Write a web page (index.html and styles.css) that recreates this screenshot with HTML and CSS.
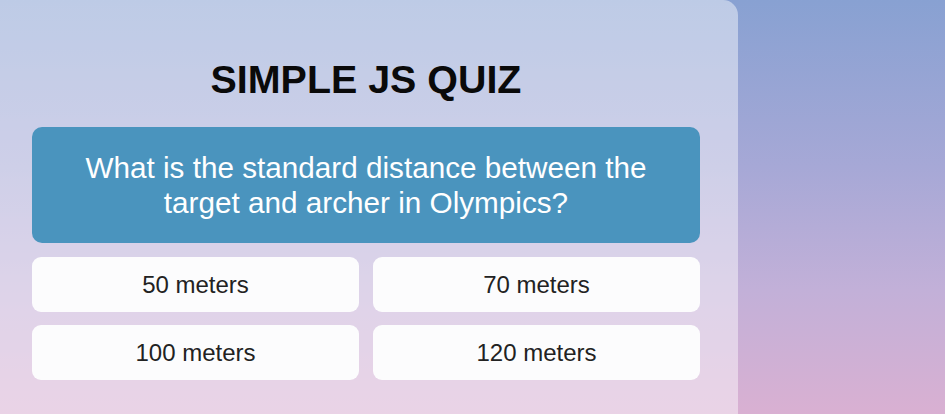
FILE: index.html
```html
<!DOCTYPE html>
<html lang="en">
<head>
<meta charset="utf-8">
<title>Simple JS Quiz</title>
<link rel="stylesheet" href="styles.css">
</head>
<body>
  <main class="quiz-card">
    <h1 class="quiz-title">SIMPLE JS QUIZ</h1>
    <div class="question-box">
      <h2 class="question-text">What is the standard distance between the target and archer in Olympics?</h2>
    </div>
    <div class="answers">
      <button class="answer">50 meters</button>
      <button class="answer">70 meters</button>
      <button class="answer">100 meters</button>
      <button class="answer">120 meters</button>
    </div>
  </main>
</body>
</html>
```

FILE: styles.css
```css
html, body {
  margin: 0;
  padding: 0;
  height: 100%;
}

body {
  font-family: "Liberation Sans", Arial, sans-serif;
  background: linear-gradient(180deg, #88a1d2 0%, #a6a8d6 40%, #c2b0d8 70%, #d9b0d2 100%);
  overflow: hidden;
}

.quiz-card {
  box-sizing: border-box;
  width: 744px;
  min-height: 100vh;
  margin-left: -6px;
  padding: 56px 38px 0;
  background: rgba(255, 255, 255, 0.45);
  border-radius: 0 15px 0 0;
  display: flex;
  flex-direction: column;
}

.quiz-title {
  margin: 0 0 25px;
  font-size: 39.4px;
  font-weight: bold;
  color: #0a0a0a;
  text-align: center;
  line-height: 46px;
}

.question-box {
  background: #4a94be;
  border-radius: 10px;
  padding: 24px 20px 23px;
}

.question-text {
  margin: 0;
  font-size: 29.7px;
  font-weight: normal;
  color: #ffffff;
  text-align: center;
  line-height: 34.5px;
}

.answers {
  margin-top: 14px;
  display: grid;
  grid-template-columns: 1fr 1fr;
  grid-auto-rows: 55px;
  gap: 13px 14px;
}

.answer {
  font-family: "Liberation Sans", Arial, sans-serif;
  font-size: 24px;
  color: #222222;
  background: #fcfcfd;
  border: none;
  border-radius: 9px;
  padding: 0;
  cursor: pointer;
}
```
